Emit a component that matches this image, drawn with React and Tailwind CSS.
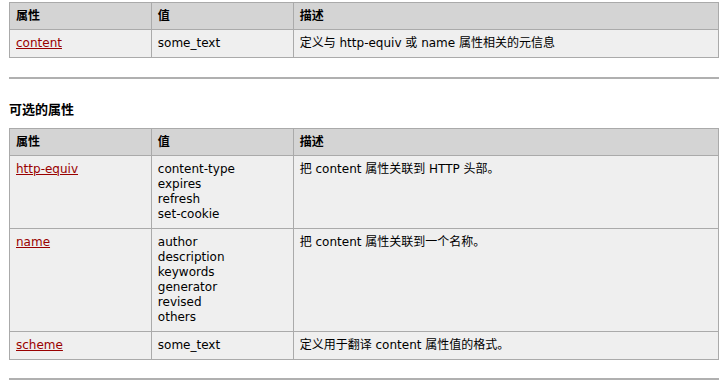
const head = ['属性', '值', '描述'];

const required = [
  {
    name: 'content',
    values: ['some_text'],
    desc: <>定义与 http-equiv 或 name 属性相关的元信息</>,
  },
];

const optional = [
  {
    name: 'http-equiv',
    values: ['content-type', 'expires', 'refresh', 'set-cookie'],
    desc: <>把 content 属性关联到 HTTP 头部。</>,
  },
  {
    name: 'name',
    values: ['author', 'description', 'keywords', 'generator', 'revised', 'others'],
    desc: <>把 content 属性关联到一个名称。</>,
  },
  {
    name: 'scheme',
    values: ['some_text'],
    desc: <>定义用于翻译 content 属性值的格式。</>,
  },
];

function AttrTable({ rows }) {
  return (
    <table className="w-[710px] border-collapse border border-[#aaaaaa] text-[12px] leading-[15px] text-black">
      <thead>
        <tr className="bg-[#d4d4d4]">
          {head.map((h, i) => (
            <th
              key={h}
              className={`border border-[#aaaaaa] px-[6px] pt-[6px] pb-[5px] text-left align-top font-bold ${
                i === 2 ? 'w-[426px]' : 'w-[142px]'
              }`}
            >
              {h}
            </th>
          ))}
        </tr>
      </thead>
      <tbody>
        {rows.map((r) => (
          <tr key={r.name} className="bg-[#efefef]">
            <td className="border border-[#aaaaaa] px-[6px] pt-[6px] pb-[6px] align-top">
              <a href="#" className="text-[#990000] underline">
                {r.name}
              </a>
            </td>
            <td className="border border-[#aaaaaa] px-[6px] pt-[6px] pb-[6px] align-top">
              {r.values.map((v) => (
                <div key={v}>{v}</div>
              ))}
            </td>
            <td className="border border-[#aaaaaa] px-[6px] pt-[6px] pb-[6px] align-top">{r.desc}</td>
          </tr>
        ))}
      </tbody>
    </table>
  );
}

export default function App() {
  return (
    <div
      className="h-[386px] w-[726px] overflow-hidden bg-white pl-[9px] pt-[2px]"
      style={{ fontFamily: '"DejaVu Sans", "Noto Sans CJK SC", sans-serif' }}
    >
      <AttrTable rows={required} />
      <div className="mt-[19px] h-[2px] w-[710px] bg-[#b0b0b0]" />
      <h2 className="mt-[23px] text-[13px] font-bold leading-[16px] text-black">可选的属性</h2>
      <div className="mt-[10px]">
        <AttrTable rows={optional} />
      </div>
      <div className="mt-[18px] h-[2px] w-[710px] bg-[#b0b0b0]" />
    </div>
  );
}
